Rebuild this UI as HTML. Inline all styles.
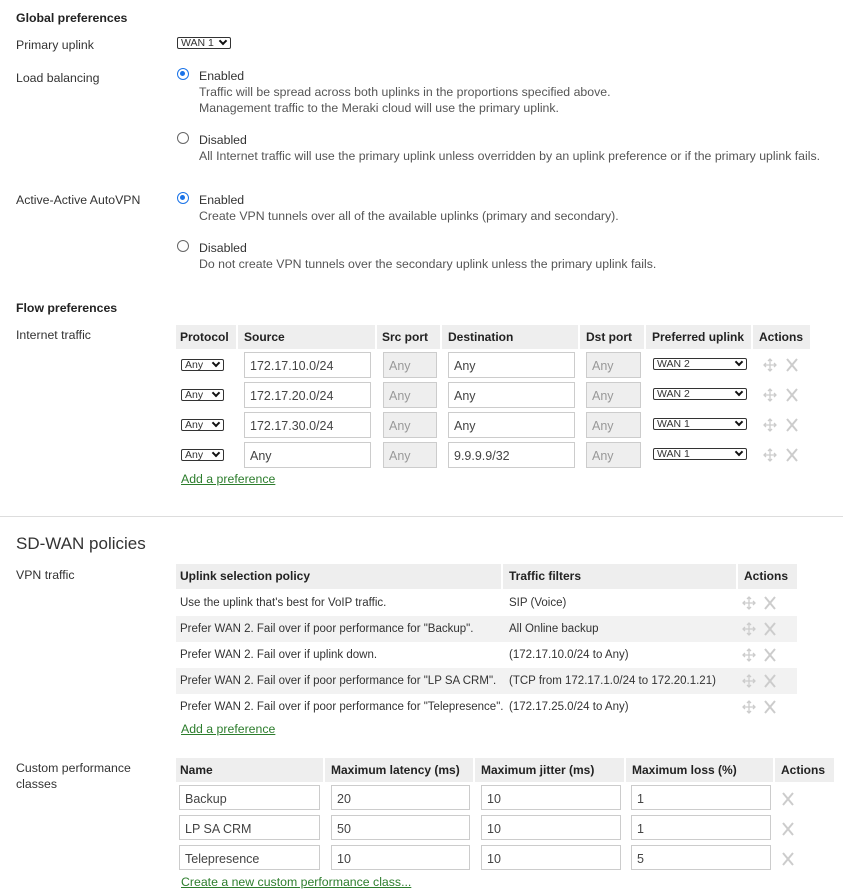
<!DOCTYPE html>
<html><head><meta charset="utf-8"><style>
*{box-sizing:border-box;margin:0;padding:0}
body{width:843px;height:896px;position:relative;background:#fff;font-family:"Liberation Sans",Arial,sans-serif;font-size:11.5px;color:#333;overflow:hidden}
.a{position:absolute;white-space:nowrap;line-height:16px;font-size:12.3px}
b{font-weight:bold;color:#222}
.d{color:#555}
.sel{position:absolute;border:1px solid #333;height:12px;font-size:10.5px;line-height:10px;padding-left:3px;background:#fff;border-radius:2px}
.sel:after{content:"";position:absolute;right:4px;top:0px;width:4px;height:4px;border-right:2px solid #111;border-bottom:2px solid #111;transform:rotate(45deg)}
.rad{position:absolute;width:12px;height:12px;border-radius:50%;border:1px solid #666;background:#fff}
.rad.on{border:1.5px solid #1a73e8}
.rad.on:after{content:"";position:absolute;left:2px;top:2px;width:5px;height:5px;border-radius:50%;background:#1a73e8}
.hd{position:absolute;background:#eee;height:24px;line-height:25px;font-weight:bold;color:#222;padding-left:4px;border-right:2px solid #fff;font-size:12px}
.in{position:absolute;height:26px;border:1px solid #ccc;padding-left:5px;line-height:26px;font-size:12.5px;color:#444;background:#fff}
.in.g{background:#eee;color:#999}
.lk{position:absolute;color:#2c7d2c;text-decoration:underline;line-height:16px;font-size:12.3px}
.row{position:absolute;left:176px;height:26px;line-height:27px;font-size:11.5px}
.row span{position:absolute}
svg{position:absolute}
</style></head><body>
<div class="a" style="left:16px;top:10px"><b>Global preferences</b></div>
<div class="a" style="left:16px;top:37px">Primary uplink</div>
<div class="sel" style="left:177px;top:37px;width:54px">WAN 1</div>

<div class="a" style="left:16px;top:70px">Load balancing</div>
<div class="rad on" style="left:177px;top:68px"></div>
<div class="a" style="left:199px;top:68px">Enabled</div>
<div class="a d" style="left:199px;top:84px">Traffic will be spread across both uplinks in the proportions specified above.</div>
<div class="a d" style="left:199px;top:100px">Management traffic to the Meraki cloud will use the primary uplink.</div>
<div class="rad" style="left:177px;top:132px"></div>
<div class="a" style="left:199px;top:132px">Disabled</div>
<div class="a d" style="left:199px;top:148px">All Internet traffic will use the primary uplink unless overridden by an uplink preference or if the primary uplink fails.</div>

<div class="a" style="left:16px;top:192px">Active-Active AutoVPN</div>
<div class="rad on" style="left:177px;top:192px"></div>
<div class="a" style="left:199px;top:192px">Enabled</div>
<div class="a d" style="left:199px;top:208px">Create VPN tunnels over all of the available uplinks (primary and secondary).</div>
<div class="rad" style="left:177px;top:240px"></div>
<div class="a" style="left:199px;top:240px">Disabled</div>
<div class="a d" style="left:199px;top:256px">Do not create VPN tunnels over the secondary uplink unless the primary uplink fails.</div>

<div class="a" style="left:16px;top:300px"><b>Flow preferences</b></div>
<div class="a" style="left:16px;top:327px">Internet traffic</div>
<div class="hd" style="left:176px;top:325px;width:62px">Protocol</div>
<div class="hd" style="left:238px;top:325px;width:139px;padding-left:6px">Source</div>
<div class="hd" style="left:377px;top:325px;width:65px;padding-left:5px">Src port</div>
<div class="hd" style="left:442px;top:325px;width:138px;padding-left:6px">Destination</div>
<div class="hd" style="left:580px;top:325px;width:66px;padding-left:6px">Dst port</div>
<div class="hd" style="left:646px;top:325px;width:107px;padding-left:6px">Preferred uplink</div>
<div class="hd" style="left:753px;top:325px;width:57px;border:0;padding-left:6px">Actions</div>

<div class="sel" style="left:181px;top:359px;width:43px">Any</div>
<div class="in" style="left:244px;top:352px;width:127px">172.17.10.0/24</div>
<div class="in g" style="left:383px;top:352px;width:54px">Any</div>
<div class="in" style="left:448px;top:352px;width:127px">Any</div>
<div class="in g" style="left:586px;top:352px;width:55px">Any</div>
<div class="sel" style="left:653px;top:358px;width:94px">WAN 2</div>

<div class="sel" style="left:181px;top:389px;width:43px">Any</div>
<div class="in" style="left:244px;top:382px;width:127px">172.17.20.0/24</div>
<div class="in g" style="left:383px;top:382px;width:54px">Any</div>
<div class="in" style="left:448px;top:382px;width:127px">Any</div>
<div class="in g" style="left:586px;top:382px;width:55px">Any</div>
<div class="sel" style="left:653px;top:388px;width:94px">WAN 2</div>

<div class="sel" style="left:181px;top:419px;width:43px">Any</div>
<div class="in" style="left:244px;top:412px;width:127px">172.17.30.0/24</div>
<div class="in g" style="left:383px;top:412px;width:54px">Any</div>
<div class="in" style="left:448px;top:412px;width:127px">Any</div>
<div class="in g" style="left:586px;top:412px;width:55px">Any</div>
<div class="sel" style="left:653px;top:418px;width:94px">WAN 1</div>

<div class="sel" style="left:181px;top:449px;width:43px">Any</div>
<div class="in" style="left:244px;top:442px;width:127px">Any</div>
<div class="in g" style="left:383px;top:442px;width:54px">Any</div>
<div class="in" style="left:448px;top:442px;width:127px">9.9.9.9/32</div>
<div class="in g" style="left:586px;top:442px;width:55px">Any</div>
<div class="sel" style="left:653px;top:448px;width:94px">WAN 1</div>

<div class="lk" style="left:181px;top:471px">Add a preference</div>
<div style="position:absolute;left:0;top:516px;width:843px;height:1px;background:#ddd"></div>
<div class="a" style="left:16px;top:534px;font-size:17px;line-height:20px;color:#333">SD-WAN policies</div>
<div class="a" style="left:16px;top:567px">VPN traffic</div>

<div class="hd" style="left:176px;top:564px;width:327px;height:25px">Uplink selection policy</div>
<div class="hd" style="left:503px;top:564px;width:235px;height:25px;padding-left:6px">Traffic filters</div>
<div class="hd" style="left:738px;top:564px;width:59px;height:25px;border:0;padding-left:6px">Actions</div>
<div class="row" style="top:590px;width:621px"><span style="left:4px">Use the uplink that's best for VoIP traffic.</span><span style="left:333px">SIP (Voice)</span></div>
<div class="row" style="top:616px;width:621px;background:#f2f2f2"><span style="left:4px">Prefer WAN 2. Fail over if poor performance for "Backup".</span><span style="left:333px">All Online backup</span></div>
<div class="row" style="top:642px;width:621px"><span style="left:4px">Prefer WAN 2. Fail over if uplink down.</span><span style="left:333px">(172.17.10.0/24 to Any)</span></div>
<div class="row" style="top:668px;width:621px;background:#f2f2f2"><span style="left:4px">Prefer WAN 2. Fail over if poor performance for "LP SA CRM".</span><span style="left:333px">(TCP from 172.17.1.0/24 to 172.20.1.21)</span></div>
<div class="row" style="top:694px;width:621px"><span style="left:4px">Prefer WAN 2. Fail over if poor performance for "Telepresence".</span><span style="left:333px">(172.17.25.0/24 to Any)</span></div>
<div class="lk" style="left:181px;top:721px">Add a preference</div>

<div class="a" style="left:16px;top:760px">Custom performance</div>
<div class="a" style="left:16px;top:776px">classes</div>
<div class="hd" style="left:176px;top:758px;width:149px">Name</div>
<div class="hd" style="left:325px;top:758px;width:150px;padding-left:6px">Maximum latency (ms)</div>
<div class="hd" style="left:475px;top:758px;width:151px;padding-left:6px">Maximum jitter (ms)</div>
<div class="hd" style="left:626px;top:758px;width:149px;padding-left:6px">Maximum loss (%)</div>
<div class="hd" style="left:775px;top:758px;width:59px;border:0;padding-left:6px">Actions</div>

<div class="in" style="left:179px;top:785px;width:141px;height:25px">Backup</div>
<div class="in" style="left:331px;top:785px;width:139px;height:25px">20</div>
<div class="in" style="left:481px;top:785px;width:140px;height:25px">10</div>
<div class="in" style="left:631px;top:785px;width:140px;height:25px">1</div>
<div class="in" style="left:179px;top:815px;width:141px;height:25px">LP SA CRM</div>
<div class="in" style="left:331px;top:815px;width:139px;height:25px">50</div>
<div class="in" style="left:481px;top:815px;width:140px;height:25px">10</div>
<div class="in" style="left:631px;top:815px;width:140px;height:25px">1</div>
<div class="in" style="left:179px;top:845px;width:141px;height:25px">Telepresence</div>
<div class="in" style="left:331px;top:845px;width:139px;height:25px">10</div>
<div class="in" style="left:481px;top:845px;width:140px;height:25px">10</div>
<div class="in" style="left:631px;top:845px;width:140px;height:25px">5</div>
<div class="lk" style="left:181px;top:874px">Create a new custom performance class...</div>

<svg width="843" height="896" style="left:0;top:0" fill="none" stroke="#ccc" stroke-width="1.3">
<defs>
<g id="m"><path d="M0 -6V6M-6 0H6M-2 -4L0 -6L2 -4M-2 4L0 6L2 4M-4 -2L-6 0L-4 2M4 -2L6 0L4 2"/></g>
<g id="x"><path d="M-5 -6L5 6M5 -6L-5 6" stroke-width="2"/></g>
</defs>
<use href="#m" x="770" y="365"/><use href="#x" x="792" y="365"/>
<use href="#m" x="770" y="395"/><use href="#x" x="792" y="395"/>
<use href="#m" x="770" y="425"/><use href="#x" x="792" y="425"/>
<use href="#m" x="770" y="455"/><use href="#x" x="792" y="455"/>
<use href="#m" x="749" y="603"/><use href="#x" x="770" y="603"/>
<use href="#m" x="749" y="629"/><use href="#x" x="770" y="629"/>
<use href="#m" x="749" y="655"/><use href="#x" x="770" y="655"/>
<use href="#m" x="749" y="681"/><use href="#x" x="770" y="681"/>
<use href="#m" x="749" y="707"/><use href="#x" x="770" y="707"/>
<use href="#x" x="788" y="799"/>
<use href="#x" x="788" y="829"/>
<use href="#x" x="788" y="859"/>
</svg>
</body></html>
